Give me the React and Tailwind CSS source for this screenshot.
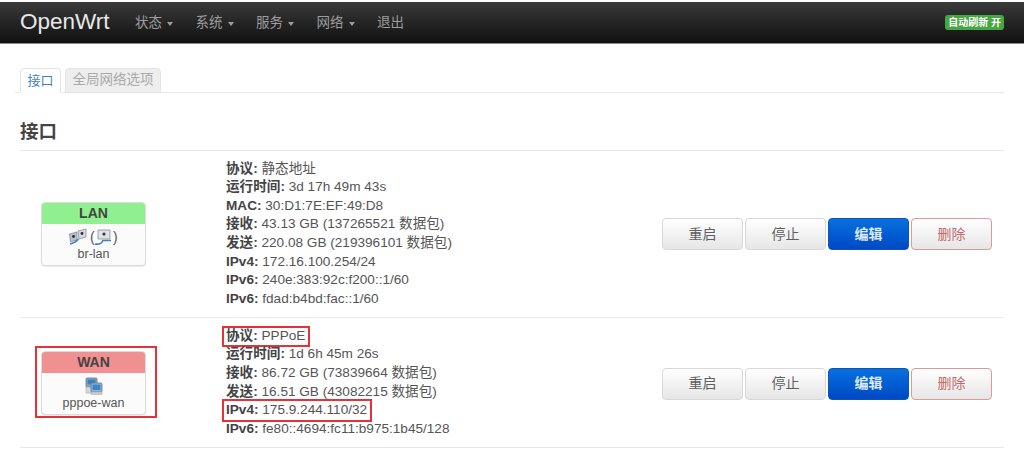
const font = { fontFamily: '"Liberation Sans", "Noto Sans CJK SC", sans-serif' };

function Caret() {
  return <span className="inline-block ml-[5px] align-middle w-0 h-0 border-x-[3.5px] border-x-transparent border-t-[4px] border-t-[#9d9d9d]" />;
}

function IconLan() {
  return (
    <svg width="49" height="18" viewBox="0 0 49 18" className="block">
      <path d="M0.5 6 L8 4 V12 L1.5 14 Z" fill="#b9c0ca" stroke="#7d8794" strokeWidth="0.7" />
      <circle cx="4.5" cy="8.5" r="1.4" fill="#2f2f2f" />
      <path d="M9 3 L17 1 V9 L10 11 Z" fill="#d5d8dd" stroke="#7d8794" strokeWidth="0.7" />
      <circle cx="13" cy="5.5" r="1.4" fill="#2f2f2f" />
      <path d="M1 16 Q6 15 9.5 11" fill="none" stroke="#4a7ebb" strokeWidth="1.5" />
      <text x="21" y="13.5" fontSize="14" fill="#555" style={font}>(</text>
      <path d="M29 2 H41 V11 H29 Z" fill="#dfe1e5" stroke="#7d8794" strokeWidth="0.7" />
      <circle cx="35" cy="6" r="1.5" fill="#2f2f2f" />
      <path d="M26 16 Q32 17 34 12.5 H42" fill="none" stroke="#4a7ebb" strokeWidth="1.7" />
      <text x="44" y="13.5" fontSize="14" fill="#555" style={font}>)</text>
    </svg>
  );
}

function IconWan() {
  return (
    <svg width="18" height="18" viewBox="0 0 18 18" className="block">
      <rect x="1" y="1" width="11" height="9" rx="1" fill="#8fa8c4" stroke="#5f7690" strokeWidth="0.8" />
      <rect x="2.5" y="2.5" width="8" height="5" fill="#3f7fc0" />
      <rect x="1" y="10" width="6" height="6" fill="#d5d7da" stroke="#a5a8ad" strokeWidth="0.6" />
      <rect x="6" y="6" width="11" height="9" rx="1" fill="#9fb4cc" stroke="#5f7690" strokeWidth="0.8" />
      <rect x="7.5" y="7.5" width="8" height="5.5" fill="#3a86cc" />
      <rect x="6" y="15" width="11" height="2.5" fill="#c9ccd0" stroke="#a5a8ad" strokeWidth="0.5" />
    </svg>
  );
}

function Badge({ name, color, icon, dev }) {
  return (
    <div className="w-[105px] h-[64px] flex flex-col rounded-[4px] border border-[#dcdcdc] bg-[#fbfbfb] shadow-[0_1px_1px_rgba(0,0,0,0.08)] overflow-hidden">
      <div className={`h-[21px] flex items-center justify-center font-bold text-[14px] text-[#444] ${color}`}>{name}</div>
      <div className="flex-1 flex flex-col items-center pt-[4px] text-[12.5px] leading-[15px] text-[#555]">
        {icon}
        <span className="mt-[1px]">{dev}</span>
      </div>
    </div>
  );
}

function Info({ k, v, mark }) {
  return (
    <div className="relative h-[18.6px] leading-[18.6px] whitespace-nowrap">
      <b className="text-[#444]">{k}:</b> {v}
      {mark && <span className={`absolute left-[-4px] border-2 border-[#e53238] ${mark}`} />}
    </div>
  );
}

function Btn({ label, cls }) {
  return (
    <button className={`w-[81px] h-[32px] rounded-[4px] border text-[14px] ${cls}`}>{label}</button>
  );
}

function Actions({ extra }) {
  return (
    <div className={`flex gap-[2px] ml-[212px] ${extra}`}>
      <Btn label="重启" cls="border-[#d8d8d8] text-[#5f5f5f] bg-gradient-to-b from-white to-[#e6e6e6]" />
      <Btn label="停止" cls="border-[#d8d8d8] text-[#5f5f5f] bg-gradient-to-b from-white to-[#e6e6e6]" />
      <Btn label="编辑" cls="border-[#0b55b8] text-[#dfe9f7] bg-gradient-to-b from-[#0a70de] to-[#0148c4] font-bold" />
      <Btn label="删除" cls="border-[#d99a9a] text-[#c46a6a] bg-gradient-to-b from-white to-[#e6e6e6]" />
    </div>
  );
}

export default function App() {
  const nav = ["状态", "系统", "服务", "网络"];
  return (
    <div style={font} className="w-[1024px] h-[450px] overflow-hidden bg-white text-[13.6px] text-[#555]">
      <div className="mt-[2px] h-[42px] pl-[20px] pr-[20px] flex items-center bg-gradient-to-b from-[#3a3a3a] to-[#111111] border-b border-[#888]">
        <span className="text-[22.5px] text-[#e8e8e8] w-[115px] -mt-[1px]">OpenWrt</span>
        {nav.map((n) => (
          <span key={n} className="w-[60.5px] mt-[2px] text-[13.5px] text-[#9d9d9d] whitespace-nowrap">
            {n}
            <Caret />
          </span>
        ))}
        <span className="mt-[2px] text-[13.5px] text-[#9d9d9d]">退出</span>
        <span className="ml-auto h-[15px] px-[3px] rounded-[3px] bg-[#45a73f] text-white text-[10px] font-bold leading-[15px] whitespace-nowrap">自动刷新 开</span>
      </div>

      <div className="mx-[20px] mt-[24px]">
        <div className="h-[25px] flex border-b border-[#e8e8e8] -ml-[5px] pl-[5px] items-end">
          <div className="h-[25px] w-[41px] -mb-px flex items-center justify-center border border-[#e4e4e4] border-b-white bg-white rounded-t-[4px] text-[13px] text-[#3f7fbf]">接口</div>
          <div className="h-[25px] w-[96px] ml-[4px] -mb-px flex items-center justify-center border border-[#e4e4e4] bg-[#eeeeee] rounded-t-[4px] text-[13.5px] text-[#aaa]">全局网络选项</div>
        </div>

        <div className="mt-[26px] h-[32px] font-bold text-[18.5px] text-[#444] leading-[26px] border-b border-[#e8e8e8]">接口</div>

        <div className="h-[167px] flex items-center border-b border-[#e8e8e8]">
          <div className="w-[21px]" />
          <Badge name="LAN" color="bg-[#90f090]" icon={<IconLan />} dev="br-lan" />
          <div className="ml-[80px] w-[224px]">
            <Info k="协议" v="静态地址" />
            <Info k="运行时间" v="3d 17h 49m 43s" />
            <Info k="MAC" v="30:D1:7E:EF:49:D8" />
            <Info k="接收" v="43.13 GB (137265521 数据包)" />
            <Info k="发送" v="220.08 GB (219396101 数据包)" />
            <Info k="IPv4" v="172.16.100.254/24" />
            <Info k="IPv6" v="240e:383:92c:f200::1/60" />
            <Info k="IPv6" v="fdad:b4bd:fac::1/60" />
          </div>
          <Actions extra="" />
        </div>

        <div className="h-[130px] flex items-center border-b border-[#e8e8e8]">
          <div className="w-[21px]" />
          <div className="relative">
            <Badge name="WAN" color="bg-[#f09090]" icon={<IconWan />} dev="pppoe-wan" />
            <span className="absolute left-[-6px] right-[-11px] top-[-5px] bottom-[-3px] border-2 border-[#e53238]" />
          </div>
          <div className="ml-[80px] w-[224px]">
            <Info k="协议" v="PPPoE" mark="w-[88px] top-[-1px] h-[21px]" />
            <Info k="运行时间" v="1d 6h 45m 26s" />
            <Info k="接收" v="86.72 GB (73839664 数据包)" />
            <Info k="发送" v="16.51 GB (43082215 数据包)" />
            <Info k="IPv4" v="175.9.244.110/32" mark="w-[150px] top-[-2px] h-[23px]" />
            <Info k="IPv6" v="fe80::4694:fc11:b975:1b45/128" />
          </div>
          <Actions extra="mt-[2px]" />
        </div>
      </div>
    </div>
  );
}
